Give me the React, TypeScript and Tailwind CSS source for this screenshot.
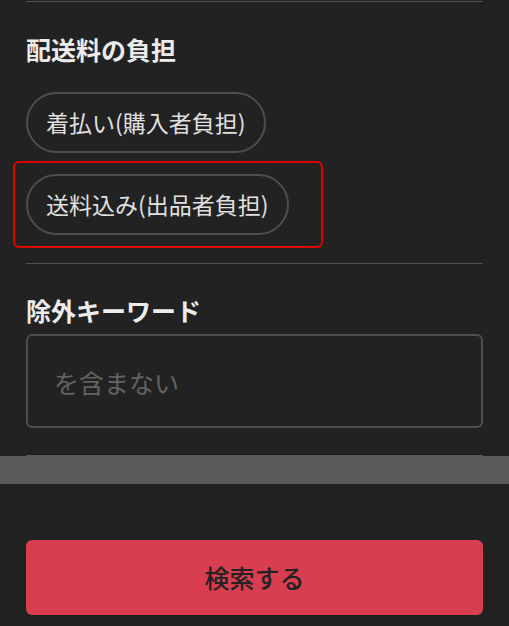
import React from "react";

const font = { fontFamily: '"Noto Sans CJK JP", "Noto Sans", sans-serif' };

function Pill({ label }: { label: string }) {
  return (
    <div className="inline-flex h-[61px] items-center rounded-full border-2 border-[#4e4e4e] px-[18px] text-[23px] text-[#e0e0e0]">
      {label}
    </div>
  );
}

export default function App() {
  return (
    <div className="min-h-[626px] w-full bg-[#222222] overflow-hidden" style={font}>
      <div className="px-[26px]">
        <div className="mt-px h-px bg-[#505050]" />
        <h2 className="mt-[31px] text-[25px] font-bold leading-[32px] text-[#ececec]">配送料の負担</h2>
        <div className="mt-[27px] flex flex-col items-start gap-[21px]">
          <Pill label="着払い(購入者負担)" />
          <div className="relative">
            <Pill label="送料込み(出品者負担)" />
            <div className="pointer-events-none absolute -bottom-[13px] -left-[13px] -right-[34px] -top-[13px] rounded-[6px] border-2 border-[#e00000]" />
          </div>
        </div>
        <div className="mt-[28px] h-px bg-[#505050]" />
        <h2 className="mt-[30px] text-[25px] font-bold leading-[32px] text-[#ececec]">除外キーワード</h2>
        <div className="mt-[8px] flex h-[94px] items-center rounded-[6px] border-2 border-[#4e4e4e] pl-[26px] pt-[4px] text-[25px] text-[#636363]">
          を含まない
        </div>
        <div className="mt-[27px] h-px bg-[#585858]" />
      </div>
      <div className="h-[28px] bg-[#5a5a5a]" />
      <div className="px-[26px] pb-[11px] pt-[56px]">
        <button className="flex h-[75px] w-full items-center justify-center rounded-[6px] bg-[#d93d50] text-[25px] font-medium text-[#222222]">
          検索する
        </button>
      </div>
    </div>
  );
}
